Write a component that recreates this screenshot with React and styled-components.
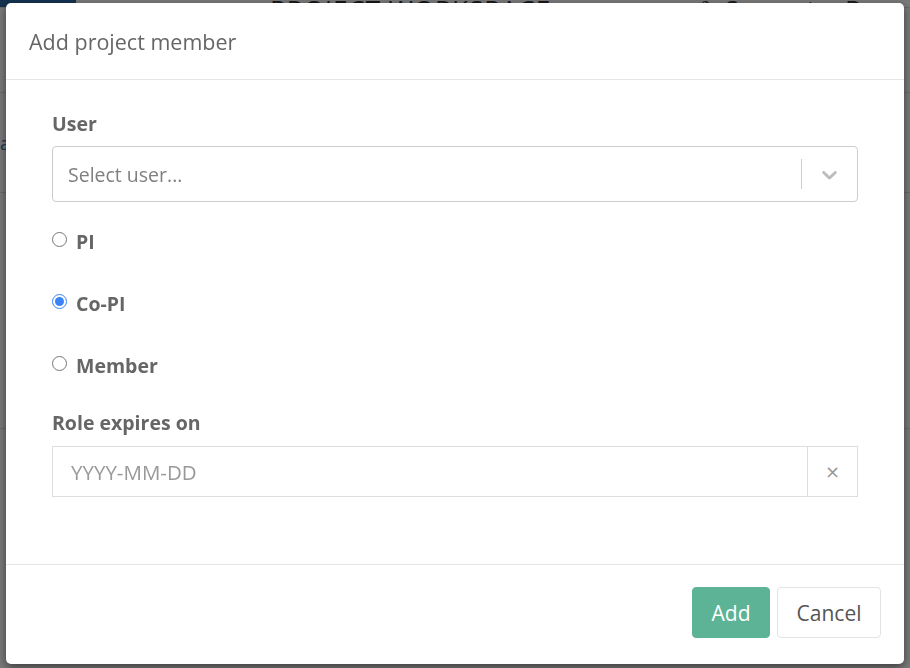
import React, { useState } from "react";
import styled, { createGlobalStyle } from "styled-components";

const GlobalStyle = createGlobalStyle`
  * { box-sizing: border-box; }
  html, body { margin: 0; padding: 0; height: 100%; }
  body {
    font-family: "Open Sans", "Noto Sans", sans-serif;
    background: #fff;
    color: #666;
    overflow: hidden;
  }
`;

// page that sits behind the modal
const Page = styled.div`
  height: 100vh;
  display: flex;
  flex-direction: column;
`;

const TopBar = styled.header`
  height: 8px;
  display: flex;
  align-items: flex-end;
  overflow: hidden;
  background: #fff;
  border-bottom: 1px solid #ddd;
`;

const Brand = styled.div`
  width: 76px;
  height: 100%;
  background: #2b6aa8;
`;

const BarTitle = styled.span`
  margin-left: 194px;
  font-size: 26px;
  line-height: 20px;
  height: 8px;
  letter-spacing: 1px;
  color: #333;
`;

const BarLinks = styled.div`
  margin-left: auto;
  display: flex;
  gap: 30px;
  padding-right: 10px;
  font-size: 24px;
  line-height: 20px;
  height: 8px;
  color: #333;
`;

const PageBody = styled.main`
  flex: 1;
  display: flex;
  flex-direction: column;
`;

const PageRow = styled.div`
  height: ${(p) => p.h}px;
  border-bottom: 1px solid #ddd;
  display: flex;
  align-items: center;
  color: #337ab7;
  font-size: 18px;
`;

const Backdrop = styled.div`
  position: fixed;
  inset: 0;
  background: rgba(0, 0, 0, 0.53);
`;

const Modal = styled.div`
  position: fixed;
  top: 3px;
  left: 6px;
  right: 6px;
  height: 661px;
  background: #fff;
  border-radius: 5px;
  box-shadow: 0 3px 9px rgba(0, 0, 0, 0.5);
  display: flex;
  flex-direction: column;
`;

const ModalHeader = styled.div`
  height: 77px;
  padding: 0 23px;
  display: flex;
  align-items: center;
  border-bottom: 1px solid #e5e5e5;
`;

const Title = styled.h4`
  margin: 0;
  font-size: 21.5px;
  font-weight: 400;
  color: #666;
`;

const ModalBody = styled.div`
  flex: 1;
  padding: 31px 46px 0;
  display: flex;
  flex-direction: column;
`;

const Label = styled.label`
  display: block;
  font-weight: 700;
  font-size: 19.5px;
  line-height: 26px;
  color: #666;
  margin-top: ${(p) => p.top || 0}px;
  margin-bottom: 9px;
`;

const SelectBox = styled.div`
  height: 56px;
  border: 1px solid #ccc;
  border-radius: 4px;
  display: flex;
  align-items: center;
  background: #fff;
`;

const Placeholder = styled.span`
  flex: 1;
  padding-left: 15px;
  font-size: 19.5px;
  color: #808080;
`;

const Separator = styled.span`
  width: 1px;
  align-self: stretch;
  margin: 12px 0;
  background: #ccc;
`;

const Indicator = styled.span`
  width: 55px;
  display: flex;
  justify-content: center;
  align-items: center;
  color: #bdbdbd;
`;

const RadioRow = styled.label`
  display: flex;
  align-items: center;
  gap: 9px;
  height: 26px;
  margin-top: ${(p) => p.top}px;
  font-weight: 700;
  font-size: 19.5px;
  color: #666;
  cursor: pointer;

  input {
    margin: 0 0 3px;
    width: 15px;
    height: 15px;
    accent-color: #3b82f6;
  }
`;

const DateGroup = styled.div`
  height: 51px;
  margin-top: 1px;
  display: flex;
  border: 1px solid #ddd;
`;

const DateInput = styled.input`
  flex: 1;
  border: none;
  outline: none;
  padding: 0 18px;
  font-family: inherit;
  font-size: 20.5px;
  color: #555;
  &::placeholder {
    color: #999;
  }
`;

const ClearButton = styled.button`
  width: 50px;
  border: none;
  border-left: 1px solid #ddd;
  background: #fff;
  color: #999;
  font-size: 18px;
  font-family: "DejaVu Sans", sans-serif;
  padding: 0;
`;

const ModalFooter = styled.div`
  height: 100px;
  border-top: 1px solid #e5e5e5;
  padding: 0 23px 4px;
  display: flex;
  justify-content: flex-end;
  align-items: center;
  gap: 7px;
`;

const Button = styled.button`
  height: 51px;
  padding: 0 18.5px;
  border-radius: 4px;
  font-family: inherit;
  font-size: 21px;
  border: 1px solid ${(p) => (p.primary ? "#5cb395" : "#e3e3e3")};
  background: ${(p) => (p.primary ? "#5cb395" : "#fff")};
  color: ${(p) => (p.primary ? "#fff" : "#555")};
  cursor: pointer;
`;

const Chevron = () => (
  <svg width="25" height="25" viewBox="0 0 20 20" fill="currentColor">
    <path d="M4.516 7.548c0.436-0.446 1.043-0.481 1.576 0l3.908 3.747 3.908-3.747c0.533-0.481 1.141-0.446 1.574 0 0.436 0.445 0.408 1.197 0 1.615-0.406 0.418-4.695 4.502-4.695 4.502-0.217 0.223-0.502 0.335-0.787 0.335s-0.57-0.112-0.789-0.335c0 0-4.287-4.084-4.695-4.502s-0.436-1.170 0-1.615z" />
  </svg>
);

const roles = [
  { value: "pi", label: "PI", top: 26 },
  { value: "copi", label: "Co-PI", top: 36 },
  { value: "member", label: "Member", top: 36 },
];

export default function App() {
  const [role, setRole] = useState("copi");

  return (
    <>
      <GlobalStyle />
      <Page>
        <TopBar>
          <Brand />
          <BarTitle>PROJECT WORKSPACE</BarTitle>
          <BarLinks>
            <span>✎ Support</span>
            <span>Docs</span>
          </BarLinks>
        </TopBar>
        <PageBody>
          <PageRow h={85} />
          <PageRow h={100}>a</PageRow>
          <PageRow h={236} />
        </PageBody>
      </Page>
      <Backdrop />
      <Modal>
        <ModalHeader>
          <Title>Add project member</Title>
        </ModalHeader>
        <ModalBody>
          <Label>User</Label>
          <SelectBox>
            <Placeholder>Select user...</Placeholder>
            <Separator />
            <Indicator>
              <Chevron />
            </Indicator>
          </SelectBox>
          {roles.map((r) => (
            <RadioRow key={r.value} top={r.top}>
              <input
                type="radio"
                name="role"
                checked={role === r.value}
                onChange={() => setRole(r.value)}
              />
              {r.label}
            </RadioRow>
          ))}
          <Label top={32}>Role expires on</Label>
          <DateGroup>
            <DateInput placeholder="YYYY-MM-DD" />
            <ClearButton>×</ClearButton>
          </DateGroup>
        </ModalBody>
        <ModalFooter>
          <Button primary>Add</Button>
          <Button>Cancel</Button>
        </ModalFooter>
      </Modal>
    </>
  );
}
